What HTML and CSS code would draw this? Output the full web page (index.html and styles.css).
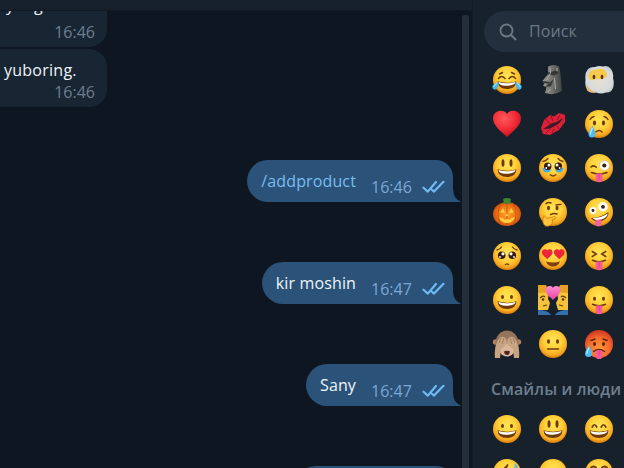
FILE: index.html
```html
<!DOCTYPE html>
<html lang="ru">
<head>
<meta charset="utf-8">
<title>Chat</title>
<link rel="stylesheet" href="styles.css">
</head>
<body>
<svg class="defs" aria-hidden="true">
  <defs>
    <radialGradient id="gold" cx=".5" cy=".38" r=".64"><stop offset="0" stop-color="#ffe556"/><stop offset=".5" stop-color="#ffd03a"/><stop offset=".8" stop-color="#f7a91f"/><stop offset="1" stop-color="#cf720c"/></radialGradient>
    <radialGradient id="hot" cx=".5" cy=".65" r=".65"><stop offset="0" stop-color="#ff9a3c"/><stop offset=".6" stop-color="#f4692c"/><stop offset="1" stop-color="#cf3420"/></radialGradient>
    <radialGradient id="red" cx=".4" cy=".3" r=".75"><stop offset="0" stop-color="#ff5a5a"/><stop offset=".6" stop-color="#ee2834"/><stop offset="1" stop-color="#b5101f"/></radialGradient>
    <radialGradient id="orange" cx=".5" cy=".5" r=".6"><stop offset="0" stop-color="#ffa62e"/><stop offset=".6" stop-color="#ee7014"/><stop offset="1" stop-color="#b03c08"/></radialGradient>
    <radialGradient id="mist" cx=".5" cy=".5" r=".65"><stop offset="0" stop-color="#e6e2d2"/><stop offset=".7" stop-color="#d6dadc"/><stop offset="1" stop-color="#aebbc6"/></radialGradient>
    <linearGradient id="stone"><stop offset="0" stop-color="#9a9a94"/><stop offset=".5" stop-color="#73736f"/><stop offset="1" stop-color="#3e4141"/></linearGradient>
    <linearGradient id="pink" x2="0" y2="1"><stop offset="0" stop-color="#ff8dd0"/><stop offset="1" stop-color="#e543a6"/></linearGradient>

    <symbol id="face" viewBox="0 0 30 30"><circle cx="15" cy="15" r="14" fill="url(#gold)"/></symbol>
    <symbol id="heart" viewBox="0 0 30 30"><path d="M15 28C10 23 1 17 1 9.5C1 1 12-.5 15 5C18-.5 29 1 29 9.5C29 17 20 23 15 28Z"/></symbol>
    <symbol id="tongue" viewBox="0 0 30 30"><path d="M11.8 20.5h6.6V26a3.3 3.3 0 0 1-6.6 0Z" fill="#f7599b"/><path d="M15.1 21v4.5" stroke="#d93c7c" stroke-width=".8"/></symbol>
    <symbol id="smile" viewBox="0 0 30 30"><path d="M5.5 16.3Q15 19 24.5 16.3Q24 24 15 24T5.5 16.3Z" fill="#6e3a0b"/><path d="M6.5 17Q15 19.4 23.5 17Q23 20.3 15 20.7T6.5 17Z" fill="#fff"/></symbol>
    <symbol id="drop" viewBox="0 0 30 30"><path d="M6 16C5 19 2 21.5 2 24.5a3.5 3.5 0 0 0 7 0C9 21.5 7 19 6 16Z" fill="#4fb9f2"/><path d="M6 18.5C5 21 3.4 23 4 25" fill="none" stroke="#b8ecff" stroke-width="1.3"/></symbol>

    <symbol id="grin" viewBox="0 0 30 30"><use href="#face"/><g fill="#6e3a0b"><ellipse cx="10.5" cy="12" rx="1.5" ry="2"/><ellipse cx="19.5" cy="12" rx="1.5" ry="2"/></g><use href="#smile"/></symbol>
    <symbol id="happy" viewBox="0 0 30 30"><use href="#face"/><g fill="#6e3a0b"><ellipse cx="11" cy="10" rx="1.5" ry="3.7"/><ellipse cx="19" cy="10" rx="1.5" ry="3.7"/></g><use href="#smile"/></symbol>
    <symbol id="beam" viewBox="0 0 30 30"><use href="#face"/><path d="M8.2 13Q10.5 8.5 12.8 13M17.2 13Q19.5 8.5 21.8 13" fill="none" stroke="#6e3a0b" stroke-width="1.7" stroke-linecap="round"/><use href="#smile"/></symbol>
    <symbol id="joy" viewBox="0 0 30 30"><use href="#face"/><path d="M6.5 13.5Q9.5 9.5 13 13.5M17 13.5Q20.5 9.5 23.5 13.5M7.5 9L10.5 7.5M19.5 7.5l3 1.5" fill="none" stroke="#6e3a0b" stroke-width="1.5" stroke-linecap="round"/><use href="#smile"/><path d="M7 17Q6 25 2.5 24.7Q-.5 24 .7 20.5Q3 17.5 7 17ZM23 17Q24 25 27.5 24.7Q30.5 24 29.3 20.5Q27 17.5 23 17Z" fill="#45b8ef"/><path d="M5 18.5Q2 19.5 1.8 22M25 18.5Q28 19.5 28.2 22" fill="none" stroke="#b1e9ff"/></symbol>
    <symbol id="moai" viewBox="0 0 30 30"><path d="M10 1.5Q16-1.5 21 1.5L22.5 9L24 26Q16 31 7 28L8.5 22.5L5 20.5L6.5 18.5L4.5 16L10 9Z" fill="url(#stone)"/><path d="M10 7.5L18 5.5L21 8L16 10.5L10 9.5ZM5 16l7.5 1-1 1.7-6-.8M7 22l6-.7 2.5-7" fill="#343938"/><path d="M12 3L12.5 8L9 15M16.5 13L17.5 24M19 3v3M12.5 24L10 27" fill="none" stroke="#aaa9a2" stroke-width="1"/></symbol>
    <symbol id="cloud" viewBox="0 0 30 30"><path d="M4 4Q7 1.5 11 2Q15 .5 19 1.5Q24 0 27 4Q30 8 29 13Q30.5 18 29 23Q27 28 22 27.5Q17 29.5 12 27.5Q5 28.5 3 25Q.5 20 1.5 15Q.5 8 4 4Z" fill="url(#mist)"/><path d="M4 12Q5 4 12 4.5Q21 2 23 9Q23 13 20 13Q15 15 11 14Q6 17 4 12Z" fill="#f6cb4c"/><path d="M3 20Q7 27 13 27Q5 28.5 3 24" fill="#ecb56c"/><g fill="#5a3510"><ellipse cx="10" cy="12" rx="1.4" ry="2.3"/><ellipse cx="18" cy="12" rx="1.4" ry="2.3"/></g></symbol>
    <symbol id="love" viewBox="0 0 30 30"><use href="#heart" fill="url(#red)"/></symbol>
    <symbol id="kiss" viewBox="0 0 30 30"><path d="M3 19L6 11L12 6L16 7.5L21 4L27 6L27 13L21 21L12 26L5 25Z" fill="#dc2136"/><path d="M5 20Q10 17 13 14.5Q19 13.5 25 9Q22 15 16 17.5Q12 20.5 5 20Z" fill="#43192a"/><path d="M8 10l4 5M13 7l2 5M22 6l-3 5M8 24l4-4M14 24l2-4M21 20l-2-3" stroke="#87152c" stroke-width="1"/></symbol>
    <symbol id="cry" viewBox="0 0 30 30"><use href="#face"/><g fill="#6e3a0b"><ellipse cx="10.5" cy="14" rx="1.6" ry="2.4"/><ellipse cx="19.5" cy="14" rx="1.6" ry="2.4"/></g><path d="M6 10.5Q7.5 8 10 7.5M20 7.5Q22.5 8 24 10.5M11.8 23Q15 20 18.2 23" fill="none" stroke="#6e3a0b" stroke-width="1.4" stroke-linecap="round"/><g transform="translate(2.5 .5)"><use href="#drop" width="30" height="30"/></g></symbol>
    <symbol id="tears" viewBox="0 0 30 30"><use href="#face"/><path d="M4.5 15h8.5q0 4.5-4 4.5t-4.5-4.5M17 15h8.5q-1 4.5-4.5 4.5t-4-4.5" fill="#43aeea"/><g fill="#351b13"><circle cx="9.7" cy="13.3" r="3.7"/><circle cx="20.3" cy="13.3" r="3.7"/></g><g fill="#fff"><circle cx="11" cy="12" r="1.5"/><circle cx="19" cy="12" r="1.5"/><circle cx="8.3" cy="15" r=".9"/><circle cx="21.7" cy="15" r=".9"/></g><path d="M5 8.5Q8 8 10 5.5M20 5.5Q22 8 25 8.5M12.3 21.8Q15 24.3 17.7 21.8" fill="none" stroke="#754010" stroke-width="1.4" stroke-linecap="round"/></symbol>
    <symbol id="wink" viewBox="0 0 30 30"><use href="#face"/><circle cx="20.5" cy="12.5" r="4.9" fill="#fff" stroke="#cfb07b" stroke-width=".6"/><circle cx="20.3" cy="12.5" r="2.1" fill="#382012"/><path d="M7 14Q9.5 11.5 12.3 14.3M7.5 19.5Q15 22.5 23 19.5" fill="none" stroke="#6e3a0b" stroke-width="1.6" stroke-linecap="round"/><use href="#tongue"/></symbol>
    <symbol id="pumpkin" viewBox="0 0 30 30"><ellipse cx="15" cy="17" rx="14" ry="12" fill="url(#orange)"/><path d="M12 7L11 2Q15 0 19 2L18 7Z" fill="#3f842e"/><path d="M9 7Q3 17 9 28M15 6v23M21 7Q27 17 21 28" fill="none" stroke="#bf5010" stroke-width=".8"/><path d="M8 15.5l3-4.5 2 5ZM17 16l2-5 3 4.5ZM13.5 19l1.5-2.5 1.5 2.5ZM7 20l3.5 1 2 1.7 2.5-.7 2.5.7 2-1.7 3.5-1Q21 26 15 26T7 20Z" fill="#ffcf40"/></symbol>
    <symbol id="think" viewBox="0 0 30 30"><use href="#face"/><g fill="#6e3a0b"><ellipse cx="10.5" cy="11" rx="1.5" ry="2.2"/><ellipse cx="19" cy="11" rx="1.5" ry="2.2"/></g><path d="M8 6.8Q10 4.8 13 6M18 8L23 7.4M12.5 17.6Q16 15.8 19 17" fill="none" stroke="#6e3a0b" stroke-width="1.4" stroke-linecap="round"/><path d="M5 22L6 18.5L9 21.5L17 19.5Q19 20.5 17 22L14 22.5Q16 27.5 10 29.3Q4 29.5 5 22Z" fill="#ffc23b" stroke="#c4740d" stroke-width=".7"/></symbol>
    <symbol id="zany" viewBox="0 0 30 30"><use href="#face"/><g fill="#fff"><circle cx="9" cy="13.5" r="3.5"/><circle cx="19" cy="9.8" r="4.7"/></g><g fill="#382012"><circle cx="9" cy="13.5" r="1.4"/><circle cx="19" cy="9.8" r="1.9"/></g><path d="M7 21Q16 21 24.5 15Q25 21 18 24Q11 26 7 21Z" fill="#6e3a0b"/><path d="M8.5 21.2Q17 21 23.7 16.5Q23.5 20.5 17 22.7Q12 24 8.5 21.2Z" fill="#fff"/><path d="M11 23.5l6-1.5 .5 4.5q0 3-3 3t-3.5-2.5Z" fill="#f2629f"/></symbol>
    <symbol id="plead" viewBox="0 0 30 30"><use href="#face"/><g fill="#351b13"><circle cx="9.7" cy="14.2" r="3.8"/><circle cx="20.3" cy="14.2" r="3.8"/></g><g fill="#fff"><circle cx="11" cy="12.8" r="1.6"/><circle cx="19" cy="12.8" r="1.6"/><circle cx="8" cy="16" r=".9"/><circle cx="22" cy="16" r=".9"/></g><path d="M5 9Q8 8.5 9.5 6M20.5 6Q22 8.5 25 9M13.5 23.5Q15 22.3 16.5 23.5" fill="none" stroke="#754010" stroke-width="1.4" stroke-linecap="round"/></symbol>
    <symbol id="hearts" viewBox="0 0 30 30"><use href="#face"/><g fill="#ed2538"><use href="#heart" x="3.5" y="7.5" width="11.5" height="11.5"/><use href="#heart" x="15.5" y="7.5" width="11.5" height="11.5"/></g><path d="M8 20.5Q15 22.5 22 20.5Q20 25.5 15 25.5T8 20.5Z" fill="#813f11"/></symbol>
    <symbol id="squint" viewBox="0 0 30 30"><use href="#face"/><path d="M8.3 10.5L12.3 13L8.3 15.5M21.7 10.5L17.7 13L21.7 15.5M8.5 19.3Q15 22.3 21.5 19.3" fill="none" stroke="#6e3a0b" stroke-width="1.5" stroke-linecap="round"/><use href="#tongue"/></symbol>
    <symbol id="couple" viewBox="0 0 30 30"><path d="M0 0Q9-1 11 6L10 14L12 18L10 25H0ZM30 0Q21-1 19 6L20 14L18 18L20 25H30Z" fill="#f5c33b"/><path d="M0 0H8L11 7L0 8ZM30 0H22L19 7L30 8Z" fill="#e4a123"/><path d="M0 25Q10 25 13 30H0ZM30 25Q20 25 17 30H30Z" fill="#3471aa"/><path d="M2 13Q5 10 7 12M28 13Q25 10 23 12M5 21l4-1M25 21l-4-1" fill="none" stroke="#6e3a0b" stroke-width="1.2"/><circle cx="5" cy="14.5" r="1.2" fill="#53300f"/><circle cx="25" cy="14.5" r="1.2" fill="#53300f"/><use href="#heart" x="7" y="0" width="16" height="16" fill="url(#pink)"/></symbol>
    <symbol id="playful" viewBox="0 0 30 30"><use href="#face"/><g fill="#6e3a0b"><ellipse cx="10.5" cy="13.8" rx="1.5" ry="2"/><ellipse cx="19.5" cy="13.8" rx="1.5" ry="2"/></g><path d="M8.5 19.3Q15 22.3 21.5 19.3" fill="none" stroke="#6e3a0b" stroke-width="1.5" stroke-linecap="round"/><use href="#tongue"/></symbol>
    <symbol id="monkey" viewBox="0 0 30 30"><circle cx="3.5" cy="13" r="2.7" fill="#b78263"/><circle cx="26.5" cy="13" r="2.7" fill="#b78263"/><ellipse cx="15" cy="14" rx="11.5" ry="12.5" fill="#94745a"/><ellipse cx="15" cy="21" rx="7.5" ry="6.5" fill="#d9b79a"/><path d="M3 29Q2 19 5 13Q8 6 13 8.5Q16 11 14 16L9 20L8 29ZM27 29Q28 19 25 13Q22 6 17 8.5Q14 11 16 16L21 20L22 29Z" fill="#c7a583"/><path d="M9 9l-2 5M12 9l-2 6M21 9l2 5M18 9l2 6" stroke="#8a694e" stroke-width=".7"/><path d="M12 22.5Q15 21 18 22.5Q17.5 26 15 26T12 22.5Z" fill="#52221c"/></symbol>
    <symbol id="neutral" viewBox="0 0 30 30"><use href="#face"/><g fill="#6e3a0b"><ellipse cx="10.5" cy="12.5" rx="1.5" ry="2.3"/><ellipse cx="19.5" cy="12.5" rx="1.5" ry="2.3"/></g><path d="M9.5 20h11" stroke="#6e3a0b" stroke-width="1.4" stroke-linecap="round"/></symbol>
    <symbol id="heat" viewBox="0 0 30 30"><circle cx="15" cy="15" r="14" fill="url(#hot)"/><g fill="#61200e"><ellipse cx="10.5" cy="15" rx="1.5" ry="2.1"/><ellipse cx="19.5" cy="15" rx="1.5" ry="2.1"/></g><path d="M7 11.5L11 10M19 10l4 1.5M9.5 22.5Q15 18.5 20.5 22.5" fill="none" stroke="#61200e" stroke-width="1.4" stroke-linecap="round"/><g transform="translate(0 1)"><use href="#tongue" width="30" height="30"/></g><use href="#drop" x="-1" y="0" width="30" height="30"/></symbol>
    <symbol id="sweat" viewBox="0 0 30 30"><use href="#face"/><path d="M12 10.5L16 6.5L13 13" fill="none" stroke="#6e3a0b" stroke-width="1.3"/><path d="M23 5q4 3 3 6-3 1-4-1Z" fill="#73b9cb"/></symbol>
    <symbol id="laugh" viewBox="0 0 30 30"><use href="#face"/><path d="M6.5 10Q9.5 7 12.5 10M17.5 10Q20.5 7 23.5 10" fill="none" stroke="#6e3a0b" stroke-width="2"/></symbol>

    <symbol id="ticks" viewBox="0 0 23 14"><path d="M1.5 7.7L5.8 11.6L14 2M10 9.8L12 11.6L21.5 1.8" fill="none" stroke="#6fbaf5" stroke-width="2.2" stroke-linecap="round" stroke-linejoin="round"/></symbol>
    <symbol id="tail" viewBox="0 0 8 16"><path d="M0 3Q.5 13 7.3 15V16H0Z" fill="#2b5278"/></symbol>
  </defs>
</svg>
<div class="app">
  <main class="chat">
    <header class="topbar"></header>
    <div class="body">
      <section class="messages">
        <article class="in first"><p class="text">yung</p><time>16:46</time></article>
        <article class="in second"><p class="text">yuboring.</p><time>16:46</time></article>
        <article class="out"><p class="text command">/addproduct</p><time>16:46</time><svg class="ticks"><use href="#ticks"/></svg><svg class="tail"><use href="#tail"/></svg></article>
        <article class="out"><p class="text">kir moshin</p><time>16:47</time><svg class="ticks"><use href="#ticks"/></svg><svg class="tail"><use href="#tail"/></svg></article>
        <article class="out"><p class="text">Sany</p><time>16:47</time><svg class="ticks"><use href="#ticks"/></svg><svg class="tail"><use href="#tail"/></svg></article>
        <article class="out next"></article>
      </section>
      <div class="track"><div class="thumb"></div></div>
    </div>
  </main>
  <aside class="panel">
    <div class="search">
      <svg class="lens" viewBox="0 0 18 18"><circle cx="7.5" cy="7.5" r="6" fill="none" stroke="currentColor" stroke-width="1.8"/><path d="M12 12l5 5" stroke="currentColor" stroke-width="2"/></svg>
      <span>Поиск</span>
    </div>
    <div class="grid">
      <svg><use href="#joy"/></svg><svg><use href="#moai"/></svg><svg><use href="#cloud"/></svg>
      <svg><use href="#love"/></svg><svg><use href="#kiss"/></svg><svg><use href="#cry"/></svg>
      <svg><use href="#happy"/></svg><svg><use href="#tears"/></svg><svg><use href="#wink"/></svg>
      <svg><use href="#pumpkin"/></svg><svg><use href="#think"/></svg><svg><use href="#zany"/></svg>
      <svg><use href="#plead"/></svg><svg><use href="#hearts"/></svg><svg><use href="#squint"/></svg>
      <svg><use href="#grin"/></svg><svg><use href="#couple"/></svg><svg><use href="#playful"/></svg>
      <svg><use href="#monkey"/></svg><svg><use href="#neutral"/></svg><svg><use href="#heat"/></svg>
    </div>
    <h2>Смайлы и люди</h2>
    <div class="grid">
      <svg><use href="#grin"/></svg><svg><use href="#happy"/></svg><svg><use href="#beam"/></svg>
      <svg><use href="#sweat"/></svg><svg><use href="#face"/></svg><svg><use href="#laugh"/></svg>
    </div>
  </aside>
</div>
</body>
</html>
```
FILE: styles.css
```css
* { box-sizing: border-box; }
body { margin: 0; overflow: hidden; background: #0e1621; font: 16px/22px "Open Sans", "Noto Sans", sans-serif; }
.defs { display: block; width: 0; height: 0; }
.app { display: flex; width: 624px; height: 468px; overflow: hidden; }
.chat { display: flex; flex-direction: column; width: 472px; flex: none; }
.topbar { height: 11px; flex: none; background: #17212b; border-bottom: 1px solid #101924; }
.body { display: flex; flex: 1; min-height: 0; }
.messages { display: flex; flex-direction: column; align-items: flex-end; width: 453px; height: 457px; }
.text { margin: 0; color: #f0f4f8; letter-spacing: .13px; white-space: nowrap; }
time { color: #6d7f8f; }
.in { display: flex; flex-direction: column; align-self: flex-start; width: 107px; flex: none; padding: 10px 12px 4px 4px; background: #182533; border-radius: 0 18px 18px 0; }
.in time { align-self: flex-end; }
.first { height: 36px; justify-content: flex-end; overflow: hidden; border-top-right-radius: 0; padding-left: 6px; }
.first .text { margin-bottom: 5px; }
.second { height: 58px; margin: 2px 0 53px; }
.second .text { letter-spacing: .25px; }
.out { position: relative; display: flex; align-items: flex-start; flex: none; height: 42px; margin-bottom: 60px; padding: 10px 8px 0 14px; background: #2b5278; border-radius: 21px 17px 0 21px; }
.out time { width: 41px; margin: 6px 10px 0 15px; color: #7da8d3; }
.command { color: #79bdf0; }
.ticks { width: 23px; height: 14px; margin-top: 10px; }
.tail { position: absolute; left: 100%; bottom: 0; width: 8px; height: 16px; }
.next { width: 158px; }
.track { width: 7px; margin: 4px 0 0 9px; }
.thumb { height: 453px; background: #242f3a; border-radius: 3px 3px 0 0; }
.panel { width: 152px; flex: none; background: #17212b; border-left: 1px solid #101924; padding: 11px 0 0 11px; overflow: hidden; }
.search { display: flex; align-items: center; width: 180px; height: 41px; padding-left: 15px; border-radius: 21px; background: #242f3d; color: #6d7883; }
.search span { position: relative; top: -1px; letter-spacing: .1px; }
.lens { width: 18px; height: 18px; margin-right: 12px; }
.grid { display: grid; grid-template-columns: repeat(3, 46px); grid-auto-rows: 44px; place-items: center; }
.grid svg { width: 30px; height: 30px; }
.search + .grid { margin-top: 6px; }
h2 { margin: 0; padding-left: 7px; height: 41px; font-size: 16px; font-weight: 600; line-height: 47px; letter-spacing: .1px; color: #6d7f8f; white-space: nowrap; }
```
